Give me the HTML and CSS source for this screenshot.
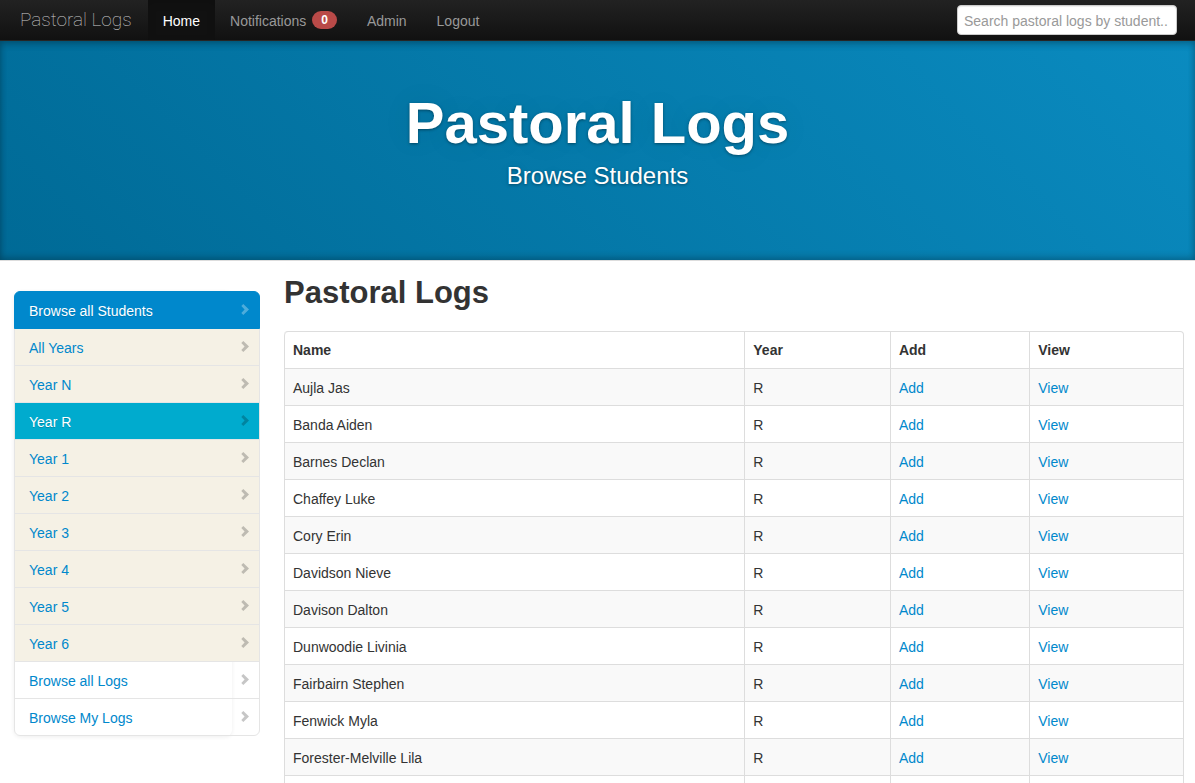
FILE: index.html
```html
<!DOCTYPE html>
<html lang="en">
<head>
<meta charset="utf-8">
<title>Pastoral Logs</title>
<meta name="viewport" content="width=device-width, initial-scale=1">
<link rel="stylesheet" href="styles.css">
</head>
<body>
<svg class="defs" aria-hidden="true"><symbol id="chevron" viewBox="0 0 8 11"><path d="M2.3 0 0.3 2 3.6 5.5 0.3 9 2.3 11 8 5.5z"/></symbol></svg>
<nav class="navbar">
  <a class="brand" href="#">Pastoral Logs</a>
  <ul class="menu">
    <li><a class="current" href="#">Home</a></li>
    <li><a href="#">Notifications <span class="badge">0</span></a></li>
    <li><a href="#">Admin</a></li>
    <li><a href="#">Logout</a></li>
  </ul>
  <form class="search"><input type="text" aria-label="Search pastoral logs by student" placeholder="Search pastoral logs by student.."></form>
</nav>
<header class="masthead">
  <h1>Pastoral Logs</h1>
  <p>Browse Students</p>
</header>
<div class="page">
  <aside>
    <ul class="sidenav">
      <li><a class="active" href="#">Browse all Students<svg><use href="#chevron"/></svg></a></li>
      <li><a class="year" href="#">All Years<svg><use href="#chevron"/></svg></a></li>
      <li><a class="year" href="#">Year N<svg><use href="#chevron"/></svg></a></li>
      <li><a class="year selected" href="#">Year R<svg><use href="#chevron"/></svg></a></li>
      <li><a class="year" href="#">Year 1<svg><use href="#chevron"/></svg></a></li>
      <li><a class="year" href="#">Year 2<svg><use href="#chevron"/></svg></a></li>
      <li><a class="year" href="#">Year 3<svg><use href="#chevron"/></svg></a></li>
      <li><a class="year" href="#">Year 4<svg><use href="#chevron"/></svg></a></li>
      <li><a class="year" href="#">Year 5<svg><use href="#chevron"/></svg></a></li>
      <li><a class="year" href="#">Year 6<svg><use href="#chevron"/></svg></a></li>
      <li><a href="#">Browse all Logs<svg><use href="#chevron"/></svg></a></li>
      <li><a href="#">Browse My Logs<svg><use href="#chevron"/></svg></a></li>
    </ul>
  </aside>
  <main>
    <h2>Pastoral Logs</h2>
    <table class="students">
      <thead><tr><th class="name">Name</th><th class="year-col">Year</th><th class="add">Add</th><th>View</th></tr></thead>
      <tbody>
        <tr><td>Aujla Jas</td><td>R</td><td><a href="#">Add</a></td><td><a href="#">View</a></td></tr>
        <tr><td>Banda Aiden</td><td>R</td><td><a href="#">Add</a></td><td><a href="#">View</a></td></tr>
        <tr><td>Barnes Declan</td><td>R</td><td><a href="#">Add</a></td><td><a href="#">View</a></td></tr>
        <tr><td>Chaffey Luke</td><td>R</td><td><a href="#">Add</a></td><td><a href="#">View</a></td></tr>
        <tr><td>Cory Erin</td><td>R</td><td><a href="#">Add</a></td><td><a href="#">View</a></td></tr>
        <tr><td>Davidson Nieve</td><td>R</td><td><a href="#">Add</a></td><td><a href="#">View</a></td></tr>
        <tr><td>Davison Dalton</td><td>R</td><td><a href="#">Add</a></td><td><a href="#">View</a></td></tr>
        <tr><td>Dunwoodie Livinia</td><td>R</td><td><a href="#">Add</a></td><td><a href="#">View</a></td></tr>
        <tr><td>Fairbairn Stephen</td><td>R</td><td><a href="#">Add</a></td><td><a href="#">View</a></td></tr>
        <tr><td>Fenwick Myla</td><td>R</td><td><a href="#">Add</a></td><td><a href="#">View</a></td></tr>
        <tr><td>Forester-Melville Lila</td><td>R</td><td><a href="#">Add</a></td><td><a href="#">View</a></td></tr>
        <tr><td>&nbsp;</td><td></td><td></td><td></td></tr>
      </tbody>
    </table>
  </main>
</div>
</body>
</html>
```
FILE: styles.css
```css
* { box-sizing: border-box; }
body {
  margin: 0;
  background: #fff;
  color: #333;
  font: 14px/20px "Liberation Sans", Arial, sans-serif;
}
a { color: #0088cc; text-decoration: none; }
ul { margin: 0; padding: 0; list-style: none; }
.defs { display: none; }

.navbar {
  position: relative;
  z-index: 1;
  display: flex;
  align-items: stretch;
  padding-right: 18px;
  background: linear-gradient(#222, #111);
  border-bottom: 1px solid #252525;
  box-shadow: 0 1px 10px rgba(0, 0, 0, .1);
}
.brand {
  padding: 10px 16px 10px 20px;
  color: #ccc;
  font-family: Roboto, sans-serif;
  font-size: 19px;
  font-weight: 100;
}
.menu { display: flex; }
.menu a {
  display: block;
  padding: 11px 15px 9px;
  color: #999;
}
.menu .current {
  background: #111;
  color: #fff;
  box-shadow: inset 0 3px 8px rgba(0, 0, 0, .125);
}
.badge {
  display: inline-block;
  margin-left: 2px;
  padding: 2px 9px;
  border-radius: 9px;
  background: #b94a48;
  color: #fff;
  font-size: 12px;
  font-weight: bold;
  line-height: 14px;
  vertical-align: top;
}
.search {
  display: flex;
  align-items: center;
  margin-left: auto;
}
.search input {
  width: 220px;
  height: 30px;
  padding: 5px 6px 3px;
  border: 1px solid #ccc;
  border-radius: 4px;
  background: #fff;
  color: #555;
  font: inherit;
  box-shadow: inset 0 1px 1px rgba(0, 0, 0, .075);
}
.search input::placeholder { color: #999; opacity: 1; }

.masthead {
  padding: 52px 20px 69px;
  border-bottom: 1px solid #ddd;
  background: linear-gradient(45deg, #006a96, #0a8bc0);
  color: #fff;
  text-align: center;
  text-shadow: 0 1px 3px rgba(0, 0, 0, .4), 0 0 30px rgba(0, 0, 0, .075);
  box-shadow: inset 0 3px 7px rgba(0, 0, 0, .2), inset 0 -3px 7px rgba(0, 0, 0, .2);
}
.masthead h1 {
  margin: 0 0 8px;
  font-size: 58px;
  line-height: 60px;
}
.masthead p {
  margin: 0;
  font-size: 24px;
  line-height: 30px;
}

.page {
  display: grid;
  grid-template-columns: minmax(0, 246fr) minmax(0, 900fr);
  gap: 24px;
  align-items: start;
  padding: 10px 11px 20px 14px;
}
.sidenav {
  margin: 20px 28px 0 0;
  border-radius: 6px;
  box-shadow: 0 1px 4px rgba(0, 0, 0, .065);
}
.sidenav li { margin: 0 -28px -1px 0; }
.sidenav li:last-child { margin-bottom: 0; }
.sidenav a {
  display: flex;
  justify-content: space-between;
  padding: 9px 10px 7px 14px;
  border: 1px solid #e5e5e5;
}
.sidenav svg {
  width: 8px;
  height: 11px;
  margin-top: 3px;
  fill: #000;
  opacity: .22;
}
.sidenav .year { background: #f5f1e5; }
.sidenav .selected { background: #00abce; color: #fff; text-shadow: 0 1px 0 rgba(0, 0, 0, .2); }
.sidenav .active {
  position: relative;
  border-color: #0088cc;
  border-radius: 6px 6px 0 0;
  background: #0088cc;
  color: #fff;
  text-shadow: 0 1px 0 rgba(0, 0, 0, .15);
}
.sidenav .active svg { fill: #fff; opacity: .3; }
.sidenav li:last-child a { border-radius: 0 0 6px 6px; }

h2 {
  margin: 0 0 18px;
  padding-top: 2px;
  font-size: 31px;
  line-height: 40px;
}
.students {
  width: 100%;
  border: 1px solid #ddd;
  border-left: 0;
  border-radius: 4px;
  border-spacing: 0;
  table-layout: fixed;
}
.students th, .students td {
  padding: 9px 8px 7px;
  border-left: 1px solid #ddd;
  text-align: left;
}
.students th { padding: 8px; }
.students td { border-top: 1px solid #ddd; }
.students th:first-child { border-top-left-radius: 4px; }
.students tbody tr:nth-child(odd) td { background: #f9f9f9; }
.name { width: 51.2%; }
.year-col { width: 16.2%; }
.add { width: 15.5%; }
```
